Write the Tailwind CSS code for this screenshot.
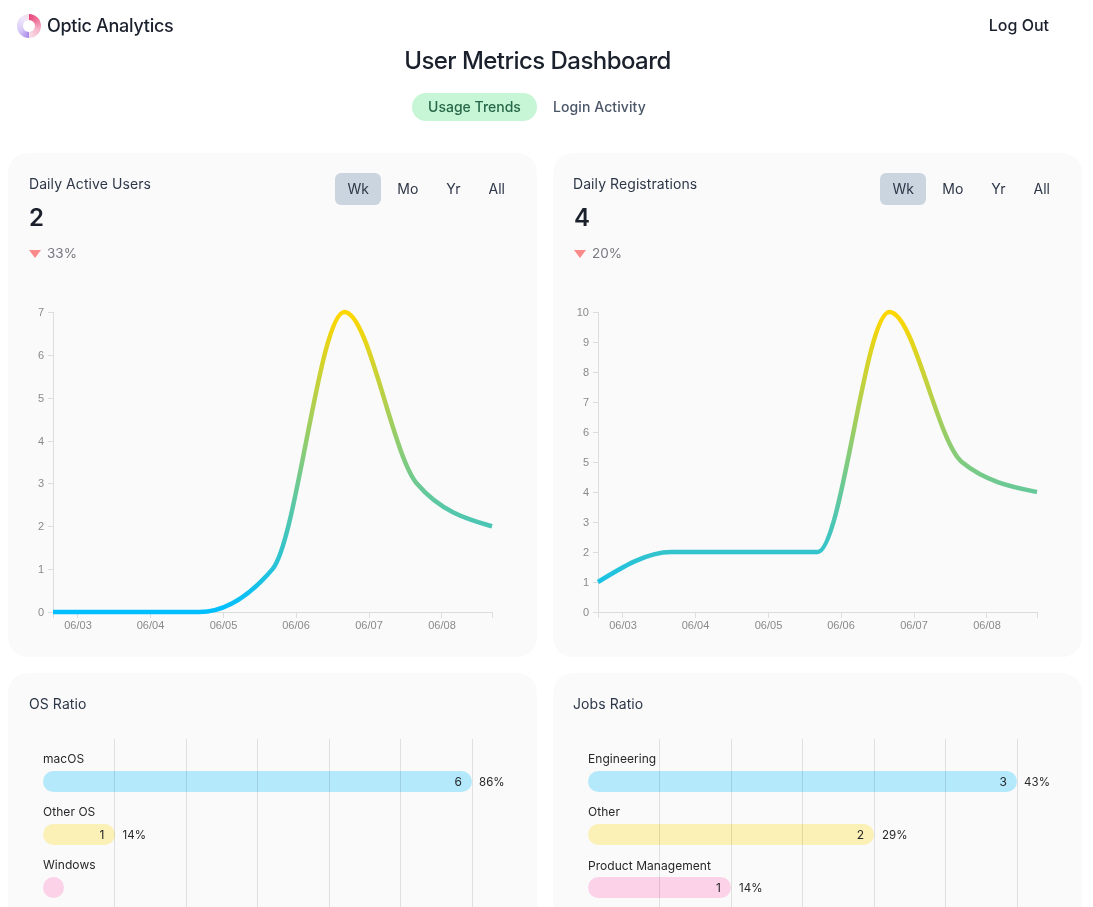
<!DOCTYPE html>
<html lang="en">
<head>
  <meta charset="UTF-8">
  <title>User Metrics Dashboard</title>
  <script src="https://cdn.jsdelivr.net/npm/@tailwindcss/browser@4"></script>
</head>
<body class="h-[907px] overflow-hidden bg-white font-['Inter',sans-serif] text-[#1a202c]">
  <div class="will-change-transform">
  <!-- Navbar -->
  <nav class="flex h-[52px] items-center justify-between pl-[17px] pr-[44px]">
    <div class="flex items-center gap-1.5">
      <div class="flex h-6 w-6 items-center justify-center rounded-full bg-[conic-gradient(#e8467c_0deg,#f07ba0_60deg,#f6b5cc_110deg,#f9dde8_178deg,#a98ae8_180deg,#d6c8f6_240deg,#efe6fb_320deg,#f8e0ea_359deg)] blur-[0.6px]">
        <div class="h-3 w-3 rounded-full bg-white"></div>
      </div>
      <span class="text-lg font-[550] tracking-[-0.28px]">Optic Analytics</span>
    </div>
    <button class="-mt-0.5 font-[550] text-[#1a202c]">Log Out</button>
  </nav>

  <h1 class="w-[1075px] text-center text-2xl leading-[18px] font-[550] tracking-[-0.55px]">User Metrics Dashboard</h1>

  <!-- Tabs -->
  <div class="mt-[23px] flex w-[1070px] justify-center gap-1">
    <button class="h-7 rounded-full bg-[#c6f6d5] px-4 text-sm font-[550] text-[#276749]">Usage Trends</button>
    <button class="h-7 rounded-full px-3 text-sm font-[550] tracking-[0.1px] text-[#4a5568]">Login Activity</button>
  </div>

  <main class="mt-8 ml-2 grid w-[1074px] grid-cols-2 gap-4">
    <!-- Daily Active Users -->
    <section class="relative h-[504px] rounded-[20px] bg-[#fafafa] py-5 pr-5 pl-[21px]">
      <div class="flex justify-between">
        <div>
          <h3 class="text-sm leading-[22px] tracking-[0.08px] text-[#2d3748]">Daily Active Users</h3>
          <p class="mt-[7px] text-2xl leading-8 font-semibold">2</p>
          <p class="mt-[9px] flex items-center gap-1.5 text-[13.5px] leading-5 text-[#777780]">
            <svg class="mt-0.5" width="12" height="8" viewBox="0 0 12 8"><polygon points="0,0 12,0 6,8" fill="#fb8a8a"/></svg>
            33%
          </p>
        </div>
        <div class="flex h-8 gap-1 text-sm text-[#2d3748]">
          <button class="w-[46px] rounded-md bg-[#cbd5e0]">Wk</button>
          <button class="rounded-md px-3">Mo</button>
          <button class="rounded-md px-3">Yr</button>
          <button class="rounded-md px-3">All</button>
        </div>
      </div>
      <svg class="absolute top-[119px] left-0" width="529" height="360" fill="none" font-family="Liberation Sans, Arial, sans-serif" font-size="11">
        <defs>
          <linearGradient id="dauLine" gradientUnits="userSpaceOnUse" x1="0" y1="40" x2="0" y2="340">
            <stop offset="0" stop-color="#ffd700"/>
            <stop offset="1" stop-color="#00bfff"/>
          </linearGradient>
        </defs>
        <path stroke="#dddddd" d="M45.5 40V340.5H484.5M40 40.5H45M40 83.5H45M40 126.5H45M40 169.5H45M40 211.5H45M40 254.5H45M40 297.5H45M40 340.5H45M45.5 340V346M69.5 340V346M142.5 340V346M215.5 340V346M288.5 340V346M361.5 340V346M433.5 340V346M484.5 340V346"/>
        <g fill="#8a8a8a" text-anchor="end">
          <text x="36" y="44">7</text>
          <text x="36" y="87">6</text>
          <text x="36" y="130">5</text>
          <text x="36" y="173">4</text>
          <text x="36" y="215">3</text>
          <text x="36" y="258">2</text>
          <text x="36" y="301">1</text>
          <text x="36" y="344">0</text>
        </g>
        <g fill="#8a8a8a" text-anchor="middle">
          <text x="70" y="357">06/03</text>
          <text x="142.5" y="357">06/04</text>
          <text x="215.5" y="357">06/05</text>
          <text x="288" y="357">06/06</text>
          <text x="361" y="357">06/07</text>
          <text x="434" y="357">06/08</text>
        </g>
        <path stroke="url(#dauLine)" stroke-width="4.5" d="M45 340L191.33 340C215.72 340 240.11 325.71 264.5 297.14C288.89 268.57 312 40 336.4 40C360.8 40 384.4 182.86 408.8 211.43C433.2 240 459.61 247.14 484 254.29"/>
      </svg>
    </section>

    <!-- Daily Registrations -->
    <section class="relative h-[504px] rounded-[20px] bg-[#fafafa] p-5">
      <div class="flex justify-between">
        <div>
          <h3 class="text-sm leading-[22px] tracking-[0.08px] text-[#2d3748]">Daily Registrations</h3>
          <p class="mt-[7px] ml-px text-2xl leading-8 font-semibold">4</p>
          <p class="mt-[9px] ml-px flex items-center gap-1.5 text-[13.5px] leading-5 text-[#777780]">
            <svg class="mt-0.5" width="12" height="8" viewBox="0 0 12 8"><polygon points="0,0 12,0 6,8" fill="#fb8a8a"/></svg>
            20%
          </p>
        </div>
        <div class="flex h-8 gap-1 text-sm text-[#2d3748]">
          <button class="w-[46px] rounded-md bg-[#cbd5e0]">Wk</button>
          <button class="rounded-md px-3">Mo</button>
          <button class="rounded-md px-3">Yr</button>
          <button class="rounded-md px-3">All</button>
        </div>
      </div>
      <svg class="absolute top-[119px] left-0" width="529" height="360" fill="none" font-family="Liberation Sans, Arial, sans-serif" font-size="11">
        <defs>
          <linearGradient id="regLine" gradientUnits="userSpaceOnUse" x1="0" y1="40" x2="0" y2="340">
            <stop offset="0" stop-color="#ffd700"/>
            <stop offset="1" stop-color="#00bfff"/>
          </linearGradient>
        </defs>
        <path stroke="#dddddd" d="M45.5 40V340.5H484.5M40 40.5H45M40 70.5H45M40 100.5H45M40 130.5H45M40 160.5H45M40 190.5H45M40 220.5H45M40 250.5H45M40 280.5H45M40 310.5H45M40 340.5H45M45.5 340V346M69.5 340V346M142.5 340V346M215.5 340V346M288.5 340V346M361.5 340V346M433.5 340V346M484.5 340V346"/>
        <g fill="#8a8a8a" text-anchor="end">
          <text x="36" y="44">10</text>
          <text x="36" y="74">9</text>
          <text x="36" y="104">8</text>
          <text x="36" y="134">7</text>
          <text x="36" y="164">6</text>
          <text x="36" y="194">5</text>
          <text x="36" y="224">4</text>
          <text x="36" y="254">3</text>
          <text x="36" y="284">2</text>
          <text x="36" y="314">1</text>
          <text x="36" y="344">0</text>
        </g>
        <g fill="#8a8a8a" text-anchor="middle">
          <text x="70" y="357">06/03</text>
          <text x="142.5" y="357">06/04</text>
          <text x="215.5" y="357">06/05</text>
          <text x="288" y="357">06/06</text>
          <text x="361" y="357">06/07</text>
          <text x="434" y="357">06/08</text>
        </g>
        <path stroke="url(#regLine)" stroke-width="4.5" d="M45 310C69.39 295 93.78 280 118.17 280L264.5 280C288.89 280 312 40 336.4 40C360.8 40 384.4 170 408.8 190C433.2 210 459.61 215 484 220"/>
      </svg>
    </section>

    <!-- OS Ratio -->
    <section class="relative h-[234px] rounded-t-[20px] bg-[#fafafa] py-5 pr-5 pl-[21px]">
      <h3 class="text-sm leading-[22px] tracking-[0.08px] text-[#2d3748]">OS Ratio</h3>
      <div class="absolute top-[66px] bottom-0 left-[106px] flex w-[359px] justify-between">
        <div class="w-px bg-black/10"></div>
        <div class="w-px bg-black/10"></div>
        <div class="w-px bg-black/10"></div>
        <div class="w-px bg-black/10"></div>
        <div class="w-px bg-black/10"></div>
        <div class="w-px bg-black/10"></div>
      </div>
      <div class="mt-[35px] ml-[14px] text-xs tracking-[0.05px] text-[#27272a]">
        <p class="leading-[18px]">macOS</p>
        <div class="mt-[3px] flex items-center">
          <div class="flex h-[21px] w-[429px] items-center justify-end rounded-full bg-[#00bfff]/[0.28] pr-2.5">6</div>
          <span class="mt-0.5 ml-[7px] text-[11.5px]">86%</span>
        </div>
        <p class="mt-[11px] leading-[18px]">Other OS</p>
        <div class="mt-[3px] flex items-center">
          <div class="flex h-[21px] w-[71.5px] items-center justify-end rounded-full bg-[#ffd700]/[0.27] pr-2.5">1</div>
          <span class="mt-0.5 ml-2 text-[11.5px]">14%</span>
        </div>
        <p class="mt-[11px] leading-[18px]">Windows</p>
        <div class="mt-[3px] flex items-center">
          <div class="h-[21px] w-[21px] rounded-full bg-[#ff69b4]/[0.27]"></div>
        </div>
      </div>
    </section>

    <!-- Jobs Ratio -->
    <section class="relative h-[234px] rounded-t-[20px] bg-[#fafafa] p-5">
      <h3 class="text-sm leading-[22px] tracking-[0.08px] text-[#2d3748]">Jobs Ratio</h3>
      <div class="absolute top-[66px] bottom-0 left-[106px] flex w-[359px] justify-between">
        <div class="w-px bg-black/10"></div>
        <div class="w-px bg-black/10"></div>
        <div class="w-px bg-black/10"></div>
        <div class="w-px bg-black/10"></div>
        <div class="w-px bg-black/10"></div>
        <div class="w-px bg-black/10"></div>
      </div>
      <div class="mt-[35px] ml-[15px] text-xs tracking-[0.05px] text-[#27272a]">
        <p class="leading-[18px]">Engineering</p>
        <div class="mt-[3px] flex items-center">
          <div class="flex h-[21px] w-[429px] items-center justify-end rounded-full bg-[#00bfff]/[0.28] pr-2.5">3</div>
          <span class="mt-0.5 ml-[7px] text-[11.5px]">43%</span>
        </div>
        <p class="mt-[11px] leading-[18px]">Other</p>
        <div class="mt-[3px] flex items-center">
          <div class="flex h-[21px] w-[286px] items-center justify-end rounded-full bg-[#ffd700]/[0.27] pr-2.5">2</div>
          <span class="mt-0.5 ml-2 text-[11.5px]">29%</span>
        </div>
        <p class="mt-[12px] leading-[18px]">Product Management</p>
        <div class="mt-[2px] flex items-center">
          <div class="flex h-[21px] w-[143px] items-center justify-end rounded-full bg-[#ff69b4]/[0.27] pr-2.5">1</div>
          <span class="mt-0.5 ml-2 text-[11.5px]">14%</span>
        </div>
      </div>
    </section>
  </main>
  </div>
</body>
</html>
